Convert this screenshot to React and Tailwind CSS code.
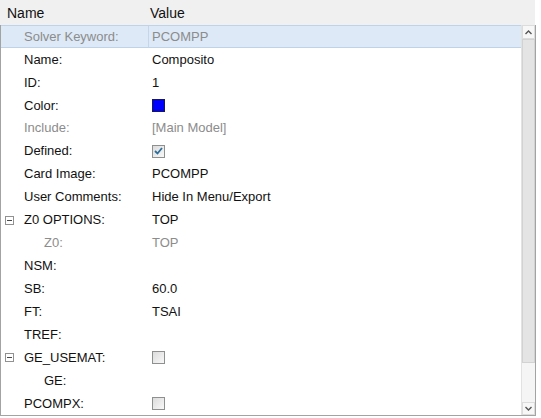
import React from 'react';

const rows = [
  { label: 'Solver Keyword:', value: 'PCOMPP', muted: true, selected: true },
  { label: 'Name:', value: 'Composito' },
  { label: 'ID:', value: '1' },
  { label: 'Color:', kind: 'color' },
  { label: 'Include:', value: '[Main Model]', muted: true },
  { label: 'Defined:', kind: 'checked' },
  { label: 'Card Image:', value: 'PCOMPP' },
  { label: 'User Comments:', value: 'Hide In Menu/Export' },
  { label: 'Z0 OPTIONS:', value: 'TOP', expander: true },
  { label: 'Z0:', value: 'TOP', muted: true, child: true },
  { label: 'NSM:', value: '' },
  { label: 'SB:', value: '60.0' },
  { label: 'FT:', value: 'TSAI' },
  { label: 'TREF:', value: '' },
  { label: 'GE_USEMAT:', kind: 'unchecked', expander: true },
  { label: 'GE:', value: '', child: true },
  { label: 'PCOMPX:', kind: 'unchecked' },
];

const Minus = () => (
  <span className="absolute left-[4px] top-[7px] w-[9px] h-[9px] border border-[#919191] bg-white flex items-center justify-center">
    <span className="w-[5px] h-px bg-[#4a4a4a]" />
  </span>
);

const CheckBox = ({ checked }) => (
  <span className="w-[13px] h-[13px] border border-[#8e8f8f] bg-gradient-to-br from-[#dcdcdc] to-[#f8f8f8] flex items-center justify-center">
    {checked && (
      <svg width="9" height="8" viewBox="0 0 9 8">
        <path d="M1 4 L3.5 6.5 L8 1" fill="none" stroke="#2b6f9c" strokeWidth="1.8" />
      </svg>
    )}
  </span>
);

const Row = ({ r }) => {
  const text = r.muted ? 'text-[#8c8c8c]' : 'text-[#111]';
  return (
    <div
      className={`relative flex items-center h-[23px] text-[13px] ${
        r.selected ? 'bg-[#dde9f6] border-y border-[#bed3ea]' : ''
      }`}
    >
      {r.expander && <Minus />}
      <span className={`${r.child ? 'pl-[43px]' : 'pl-[23px]'} w-[147px] shrink-0 ${text}`}>{r.label}</span>
      {r.selected && <span className="w-px self-stretch bg-[#c3d6ec]" />}
      <span className={`${r.selected ? 'pl-[3px]' : 'pl-[4px]'} flex items-center ${text}`}>
        {r.kind === 'color' && <span className="w-[13px] h-[13px] bg-[#0000ff] border border-[#1a1a4a]" />}
        {r.kind === 'checked' && <CheckBox checked />}
        {r.kind === 'unchecked' && <CheckBox />}
        {!r.kind && r.value}
      </span>
    </div>
  );
};

export default function App() {
  return (
    <div className="w-[541px] h-[418px] bg-white overflow-hidden font-['Liberation_Sans',Arial,sans-serif]">
      <div className="flex h-[25px] w-[535px] bg-[#f0f0f0] text-[14px] text-[#111] pt-[5px] leading-[16px]">
        <span className="pl-[7px] w-[150px]">Name</span>
        <span>Value</span>
      </div>
      <div className="flex h-[391px] w-[536px] border-l border-b border-r border-[#a3a3a3]">
        <div className="w-[520px] flex flex-col">
          {rows.map((r) => (
            <Row key={r.label} r={r} />
          ))}
        </div>
        <div className="w-[14px] flex flex-col bg-[#f5f5f5] border-l border-[#e2e2e2]">
          <div className="h-[14px] flex items-center justify-center bg-[#f7f7f7] border border-[#dcdcdc]">
            <svg width="7" height="5" viewBox="0 0 7 5">
              <path d="M0.5 4 L3.5 1 L6.5 4" fill="none" stroke="#555" strokeWidth="1.4" />
            </svg>
          </div>
          <div className="h-[324px] bg-[#e4e4e4] border border-[#d2d2d2]" />
          <div className="flex-1" />
          <div className="h-[13px] flex items-center justify-center bg-[#f7f7f7] border border-[#dcdcdc]">
            <svg width="7" height="5" viewBox="0 0 7 5">
              <path d="M0.5 1 L3.5 4 L6.5 1" fill="none" stroke="#555" strokeWidth="1.4" />
            </svg>
          </div>
        </div>
      </div>
    </div>
  );
}
